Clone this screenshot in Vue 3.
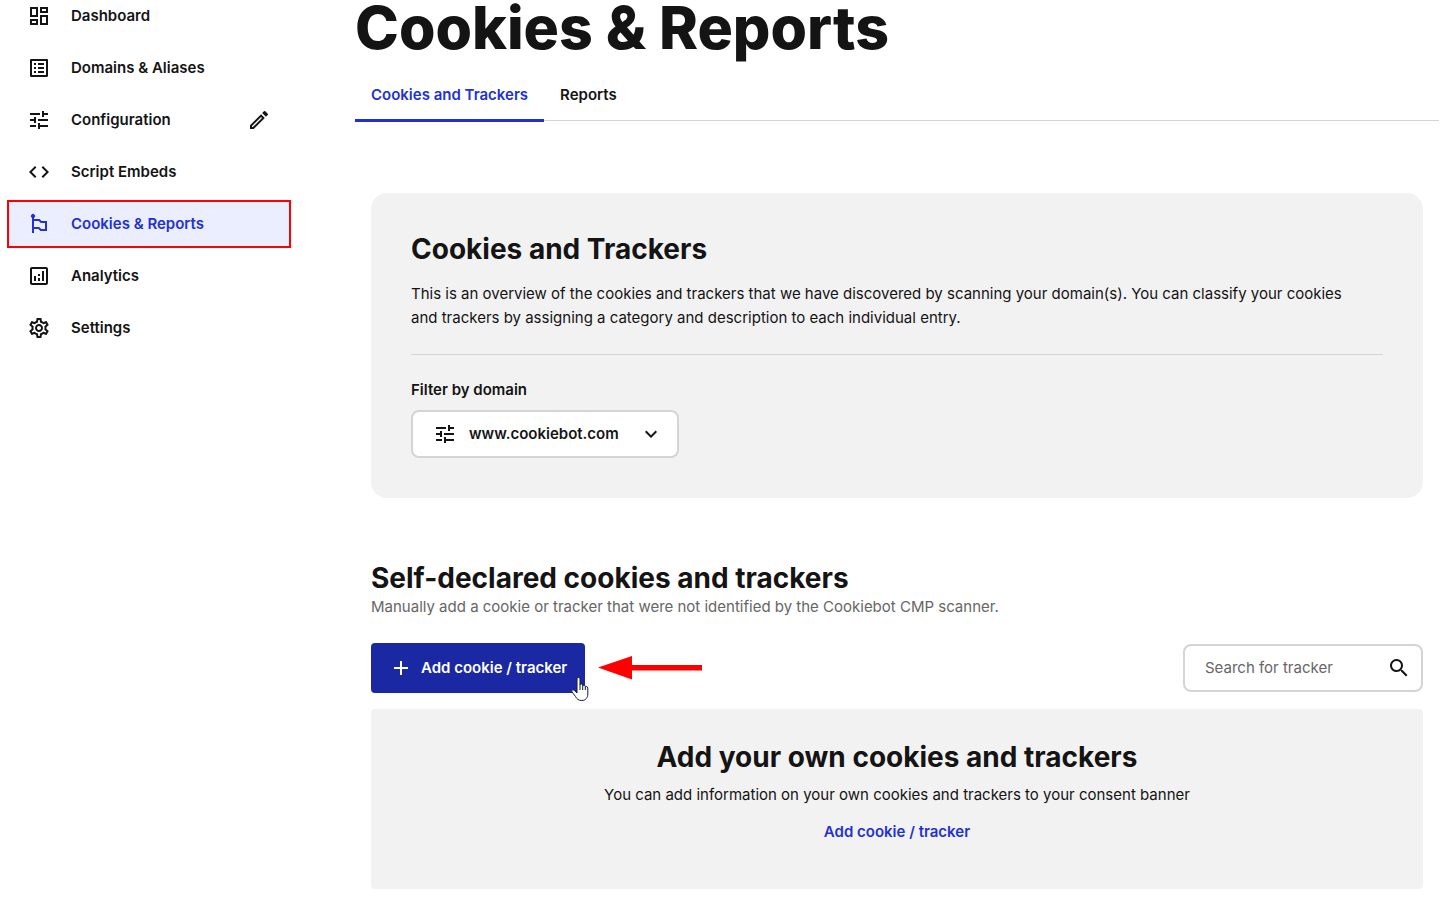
<script setup>
import { ref } from 'vue';

const TUNE = 'M3 17v2h6v-2H3zM3 5v2h10V5H3zm10 16v-2h8v-2h-8v-2h-2v6h2zM7 9v2H3v2h4v2h2V9H7zm14 4v-2H11v2h10zm-6-4h2V7h4V5h-4V3h-2v6z';

const menu = [
    {
        name: 'Dashboard',
        icon: 'M19 5v2h-4V5h4M9 5v6H5V5h4m10 8v6h-4v-6h4M9 17v2H5v-2h4M21 3h-8v6h8V3zM11 3H3v10h8V3zm10 8h-8v10h8V11zm-10 4H3v6h8v-6z',
    },
    {
        name: 'Domains & Aliases',
        icon: 'M11 7h6v2h-6V7zm0 4h6v2h-6v-2zm0 4h6v2h-6v-2zM7 7h2v2H7V7zm0 4h2v2H7v-2zm0 4h2v2H7v-2zM20.1 3H3.9c-.5 0-.9.4-.9.9v16.2c0 .4.4.9.9.9h16.2c.4 0 .9-.5.9-.9V3.9c0-.5-.5-.9-.9-.9zM19 19H5V5h14v14z',
    },
    { name: 'Configuration', icon: TUNE, editable: true },
    {
        name: 'Script Embeds',
        icon: 'M9.4 16.6 4.8 12l4.6-4.6L8 6l-6 6 6 6 1.4-1.4zm5.2 0 4.6-4.6-4.6-4.6L16 6l6 6-6 6-1.4-1.4z',
    },
    {
        name: 'Cookies & Reports',
        icon: 'M7 5.7V7h5.6l2 2H20v10h-6.6l-2-2H7v4H5V5.7A2 2 0 1 1 7 5.7zM7 9v6h5.2l2 2H18v-6h-4.2l-2-2H7z',
        active: true,
    },
    {
        name: 'Analytics',
        icon: 'M19 3H5c-1.1 0-2 .9-2 2v14c0 1.1.9 2 2 2h14c1.1 0 2-.9 2-2V5c0-1.1-.9-2-2-2zm0 16H5V5h14v14zM7 12h2v5H7v-5zm8-5h2v10h-2V7zm-4 7h2v3h-2v-3zm0-4h2v2h-2v-2z',
    },
    {
        name: 'Settings',
        icon: 'M19.43 12.98c.04-.32.07-.64.07-.98 0-.34-.03-.66-.07-.98l2.11-1.65c.19-.15.24-.42.12-.64l-2-3.46c-.09-.16-.26-.25-.44-.25-.06 0-.12.01-.17.03l-2.49 1c-.52-.4-1.08-.73-1.69-.98l-.38-2.65C14.46 2.18 14.25 2 14 2h-4c-.25 0-.46.18-.49.42l-.38 2.65c-.61.25-1.17.59-1.69.98l-2.49-1c-.06-.02-.12-.03-.18-.03-.17 0-.34.09-.43.25l-2 3.46c-.13.22-.07.49.12.64l2.11 1.65c-.04.32-.07.65-.07.98 0 .33.03.66.07.98l-2.11 1.65c-.19.15-.24.42-.12.64l2 3.46c.09.16.26.25.44.25.06 0 .12-.01.17-.03l2.49-1c.52.4 1.08.73 1.69.98l.38 2.65c.03.24.24.42.49.42h4c.25 0 .46-.18.49-.42l.38-2.65c.61-.25 1.17-.59 1.69-.98l2.49 1c.06.02.12.03.18.03.17 0 .34-.09.43-.25l2-3.46c.12-.22.07-.49-.12-.64l-2.11-1.65zm-1.98-1.71c.04.31.05.52.05.73 0 .21-.02.43-.05.73l-.14 1.13.89.7 1.08.84-.7 1.21-1.27-.51-1.04-.42-.9.68c-.43.32-.84.56-1.25.73l-1.06.43-.16 1.13-.2 1.35h-1.4l-.19-1.35-.16-1.13-1.06-.43c-.43-.18-.83-.41-1.23-.71l-.91-.7-1.06.43-1.27.51-.7-1.21 1.08-.84.89-.7-.14-1.13c-.03-.31-.05-.54-.05-.74s.02-.43.05-.73l.14-1.13-.89-.7-1.08-.84.7-1.21 1.27.51 1.04.42.9-.68c.43-.32.84-.56 1.25-.73l1.06-.43.16-1.13.2-1.35h1.39l.19 1.35.16 1.13 1.06.43c.43.18.83.41 1.23.71l.91.7 1.06-.43 1.27-.51.7 1.21-1.07.85-.89.7.14 1.13zM12 8c-2.21 0-4 1.79-4 4s1.79 4 4 4 4-1.79 4-4-1.79-4-4-4zm0 6c-1.1 0-2-.9-2-2s.9-2 2-2 2 .9 2 2-.9 2-2 2z',
    },
];

const tabs = ['Cookies and Trackers', 'Reports'];
const activeTab = ref(tabs[0]);
const domain = ref('www.cookiebot.com');
const search = ref('');
</script>

<template>
    <div class="layout">
        <nav class="sidebar">
            <a
                v-for="item in menu"
                :key="item.name"
                href="#"
                class="menuItem"
                :class="{ active: item.active }"
            >
                <svg class="icon" viewBox="0 0 24 24"><path :d="item.icon" /></svg>
                <span class="menuLabel">{{ item.name }}</span>
                <svg v-if="item.editable" class="icon" viewBox="0 0 24 24">
                    <path d="M3 17.25V21h3.75L17.81 9.94l-3.75-3.75L3 17.25zM5.92 19H5v-.92l9.06-9.06.92.92L5.92 19zM20.71 5.63l-2.34-2.34a1 1 0 0 0-1.41 0l-1.83 1.83 3.75 3.75 1.83-1.83a1 1 0 0 0 0-1.41z" />
                </svg>
            </a>
        </nav>

        <main class="main">
            <h1>Cookies &amp; Reports</h1>
            <div class="tabs">
                <button
                    v-for="tab in tabs"
                    :key="tab"
                    type="button"
                    class="tab"
                    :class="{ active: tab === activeTab }"
                    @click="activeTab = tab"
                >
                    {{ tab }}
                </button>
            </div>

            <div class="content">
                <section class="card">
                    <h2>Cookies and Trackers</h2>
                    <p class="cardText">
                        This is an overview of the cookies and trackers that we have discovered by
                        scanning your domain(s). You can classify your cookies and trackers by
                        assigning a category and description to each individual entry.
                    </p>
                    <div class="filter">
                        <label for="domain">Filter by domain</label>
                        <div class="selectBox">
                            <svg class="icon selectIcon" viewBox="0 0 24 24"><path :d="TUNE" /></svg>
                            <select id="domain" v-model="domain">
                                <option>www.cookiebot.com</option>
                            </select>
                            <svg class="icon chevron" viewBox="0 0 24 24">
                                <path d="M16.59 8.59 12 13.17 7.41 8.59 6 10l6 6 6-6z" />
                            </svg>
                        </div>
                    </div>
                </section>

                <section>
                    <h2>Self-declared cookies and trackers</h2>
                    <p class="muted">
                        Manually add a cookie or tracker that were not identified by the Cookiebot CMP scanner.
                    </p>
                    <div class="toolbar">
                        <div class="addWrapper">
                            <button type="button" class="addButton">
                                <svg class="icon" viewBox="0 0 24 24"><path d="M19 13h-6v6h-2v-6H5v-2h6V5h2v6h6z" /></svg>
                                Add cookie / tracker
                            </button>
                            <svg class="cursor" viewBox="0 0 18 24">
                                <path
                                    d="M6 2c0-2 3-2 3 0v6c0-1.5 2.5-1.5 2.700 0v1c.2-1.3 2.5-1.2 2.6.3v.8c.5-1.1 2.5-.8 2.5.9V17c0 3.5-2 6.5-6 6.5-3.5 0-5-1.5-6.300-4L1 15c-1-2 .8-3 2.200-1.700L6 16V2z"
                                    fill="#fff"
                                    stroke="#111a33"
                                />
                                <path d="M9 8v5M11.700 9v4M14.300 10v3" fill="none" stroke="#111a33" />
                            </svg>
                        </div>
                        <svg class="arrow" viewBox="0 0 104 24">
                            <path d="M0 11.500 34 0v9h70v5.500H34v9z" fill="#f00" />
                        </svg>
                        <div class="search">
                            <input
                                v-model="search"
                                type="text"
                                aria-label="Search for tracker"
                                placeholder="Search for tracker"
                            />
                            <svg class="icon" viewBox="0 0 24 24">
                                <path d="M15.500 14h-.79l-.28-.27A6.500 6.500 0 1 0 13.730 14.430l.27.28v.79l5 4.990L20.490 19l-4.990-5zm-6 0a4.500 4.500 0 1 1 0-9 4.500 4.500 0 0 1 0 9z" />
                            </svg>
                        </div>
                    </div>
                    <div class="empty">
                        <h2>Add your own cookies and trackers</h2>
                        <p>You can add information on your own cookies and trackers to your consent banner</p>
                        <a href="#">Add cookie / tracker</a>
                    </div>
                </section>
            </div>
        </main>
    </div>
</template>

<style>
body {
    margin: 0;
    background: #fff;
}
</style>

<style scoped>
.layout {
    display: flex;
    gap: 64px;
    padding: 0 5px 0 7px;
    color: #141414;
    font-family: Inter, "Liberation Sans", sans-serif;
    font-size: 15px;
    line-height: 24px;
}

h1,
h2,
p {
    margin: 0;
}

a {
    color: inherit;
    text-decoration: none;
}

button,
input,
select {
    font: inherit;
    color: inherit;
}

.icon {
    width: 24px;
    height: 24px;
    flex-shrink: 0;
    fill: currentColor;
}

.sidebar {
    display: flex;
    flex-direction: column;
    gap: 4px;
    width: 284px;
    flex-shrink: 0;
    margin-top: -8px;
}

.menuItem {
    display: flex;
    align-items: center;
    gap: 20px;
    box-sizing: border-box;
    height: 48px;
    padding: 0 18px;
    border: 2px solid transparent;
    font-weight: 600;
}

.menuItem.active {
    background: #ebeeff;
    border-color: #f00;
    color: #2231d1;
}

.menuLabel {
    flex: 1;
}

.main {
    flex: 1;
    min-width: 0;
}

h1 {
    font-size: 59px;
    font-weight: 800;
    line-height: 56px;
}

h2 {
    font-size: 28px;
    font-weight: 700;
    line-height: 33px;
}

.tabs {
    display: flex;
    margin-top: 12px;
    border-bottom: 1px solid #d4d4d4;
}

.tab {
    margin-bottom: -2px;
    padding: 15px 16px 12px;
    border: 0;
    border-bottom: 3px solid transparent;
    background: none;
    font-weight: 600;
}

.tab.active {
    border-bottom-color: #2231d1;
    color: #2231d1;
}

.content {
    padding: 72px 16px 0;
}

.card {
    margin-bottom: 64px;
    padding: 40px;
    border-radius: 16px;
    background: #f2f2f2;
}

.cardText {
    margin-top: 16px;
    padding-right: 16px;
}

.filter {
    margin-top: 24px;
    padding-top: 23px;
    border-top: 1px solid #d4d4d4;
}

.filter label {
    display: block;
    margin-bottom: 8px;
    font-weight: 600;
}

.selectBox {
    position: relative;
    width: 268px;
}

.selectBox select {
    display: block;
    width: 100%;
    height: 48px;
    padding: 0 48px 0 56px;
    border: 2px solid #d4d4d4;
    border-radius: 8px;
    background: #fff;
    appearance: none;
    font-weight: 600;
}

.selectIcon,
.chevron {
    position: absolute;
    top: 12px;
    pointer-events: none;
}

.selectIcon {
    left: 22px;
}

.chevron {
    right: 16px;
}

.muted {
    color: #666;
}

.toolbar {
    display: flex;
    align-items: center;
    margin: 24px 0 16px;
}

.addWrapper {
    position: relative;
}

.addButton {
    display: flex;
    align-items: center;
    gap: 8px;
    height: 50px;
    padding: 0 18px;
    border: 0;
    border-radius: 4px;
    background: #1a28a3;
    color: #fff;
    font-weight: 600;
}

.cursor {
    position: absolute;
    right: -4px;
    bottom: -8px;
    width: 18px;
    height: 24px;
}

.arrow {
    width: 104px;
    height: 24px;
    margin-left: 13px;
}

.search {
    display: flex;
    align-items: center;
    box-sizing: border-box;
    width: 240px;
    height: 48px;
    margin-left: auto;
    padding: 0 10px 0 20px;
    border: 2px solid #d4d4d4;
    border-radius: 8px;
}

.search input {
    flex: 1;
    min-width: 0;
    padding: 0;
    border: 0;
    outline: 0;
    background: none;
}

.search input::placeholder {
    color: #666;
    opacity: 1;
}

.empty {
    padding: 32px 32px 45px;
    border-radius: 4px;
    background: #f2f2f2;
    text-align: center;
}

.empty p {
    margin: 9px 0 13px;
}

.empty a {
    color: #2231d1;
    font-weight: 600;
}
</style>
